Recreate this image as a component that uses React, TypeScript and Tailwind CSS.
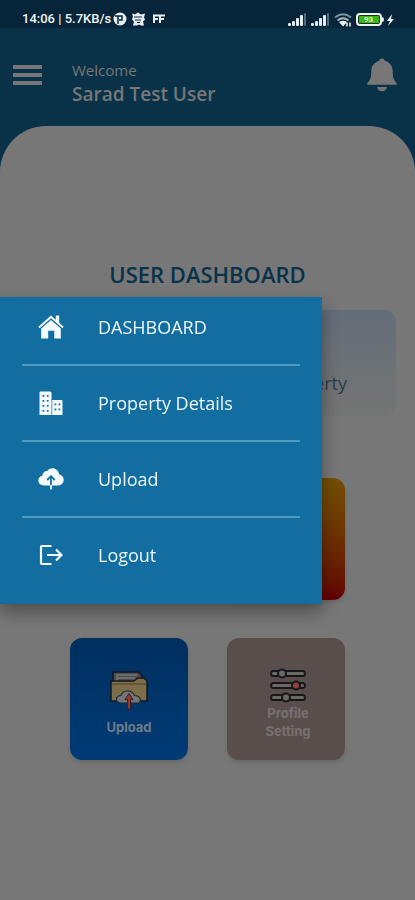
import type { ReactNode } from "react";

type MenuItem = { label: string; icon: ReactNode };

const HomeIcon = () => (
  <svg viewBox="0 0 26 24" className="w-[26px] h-6" fill="#f4fbff">
    <path d="M13 .5 17.800 4.700V.5h3.400v7.200l4.500 4-1.300 1.500L13 3.300 1.600 13.200.3 11.700z" />
    <path d="M13 5 22.800 13.500V23.500h-6.500v-7.800H10.200v7.800H3.200V13.500z" />
  </svg>
);

const BuildingIcon = () => (
  <svg viewBox="0 0 24 24" className="w-6 h-6" fill="#f4fbff">
    <path d="M1.500 .5H11q1.500 0 1.500 1.500V24H.5V1.500q0-1 1-1z" />
    <path d="M13.200 9h9.300q1 0 1 1v13q0 1-1 1h-9.300z" />
    <path
      fill="#126ea1"
      d="M3.500 4h1.800v1.800H3.500zM7.800 4h1.800v1.800H7.800zM3.500 9h1.800v1.800H3.500zM7.800 9h1.800v1.800H7.800zM3.500 14h1.800v1.800H3.500zM7.800 14h1.800v1.800H7.800zM3.500 19h1.800v1.800H3.500zM7.800 19h1.800v1.800H7.800zM15.500 12.500h1.800v1.800h-1.800zM19.500 12.500h1.800v1.800h-1.800zM15.500 17.500h1.800v1.800h-1.800zM19.500 17.500h1.800v1.800h-1.800z"
    />
  </svg>
);

const CloudIcon = () => (
  <svg viewBox="0 0 26 22" className="w-[26px] h-[22px]">
    <path
      fill="#f4fbff"
      d="M6 17.500C2.700 17.500.3 15.400.3 12.600c0-2.400 1.700-4.300 4-4.800C4.600 4.400 7 2.700 9.300 3c1.100-1.800 3-2.700 5-2.700 3.500 0 6.300 2.500 6.700 6 2.800.6 4.700 2.700 4.700 5.500 0 3.200-2.500 5.700-5.700 5.700z"
    />
    <path d="M13 18V9M9.200 12 13 8.200 16.800 12" fill="none" stroke="#126ea1" strokeWidth="1.800" />
    <path d="M13 17v4.500" stroke="#f4fbff" strokeWidth="1.800" />
  </svg>
);

const LogoutIcon = () => (
  <svg viewBox="0 0 24 22" className="w-6 h-[22px]" fill="none" stroke="#f4fbff" strokeWidth="2.200">
    <path d="M12.500 2H3Q2 2 2 3v16q0 1 1 1h9.500M8 11h14M17 5.500 22.500 11 17 16.500" />
  </svg>
);

const BellIcon = () => (
  <svg viewBox="0 0 30 34" className="w-[30px] h-[34px]" fill="#777">
    <path d="M15 .5c1.400 0 2.500.9 2.700 2.200 4.800 1.200 8 5.200 8 10.300 0 6.500.8 9 4 12v1.700H.3V25c3.200-3 4-5.500 4-12 0-5.100 3.200-9.100 8-10.300C12.500 1.400 13.600.5 15 .5z" />
    <path d="M10 29h10c-.5 2.600-2.200 4.300-5 4.300S10.500 31.600 10 29z" />
  </svg>
);

const FolderIcon = () => (
  <svg viewBox="0 0 40 40" className="w-10 h-10" strokeLinejoin="round">
    <path d="M4 14V2h26l3 4v9z" fill="#4b4b4d" stroke="#101820" strokeWidth="1.500" />
    <path d="M8 11V5h20M9 8h17" fill="none" stroke="#777" strokeWidth="1.500" />
    <path d="M2 11h23l4-3h6l3 3v20H2z" fill="#7c6e48" stroke="#101820" strokeWidth="1.500" />
    <path d="M3 14h34" stroke="#5f5230" strokeWidth="1.500" />
    <path
      d="M11 33q-4-1-3.500-4 .5-3.500 4.500-3.500 1.500-4.500 6.500-4.500t7 4.500q5 0 6 4.500 0 2.500-2 3z"
      fill="#737679"
      stroke="#202830"
      strokeWidth="1.200"
    />
    <path d="M20 23.500 24 29.500h-2.500V39h-3v-9.500H16z" fill="#8c3b2d" stroke="#3d2020" />
  </svg>
);

const SlidersIcon = () => (
  <svg viewBox="0 0 38 36" className="w-[38px] h-9" fill="#6b6868" stroke="#17171b" strokeWidth="2">
    <rect x="2" y="3" width="34" height="5" rx="2.500" />
    <rect x="2" y="15" width="34" height="5" rx="2.500" />
    <rect x="2" y="27" width="34" height="5" rx="2.500" />
    <circle cx="13" cy="5.500" r="4" />
    <circle cx="27" cy="17.500" r="4" fill="#93413f" />
    <circle cx="17" cy="29.500" r="4" />
  </svg>
);

const SignalIcon = () => (
  <svg viewBox="0 0 19 14" className="w-[19px] h-3.5" fill="#e4edf2">
    <rect x="0" y="10" width="3" height="3" rx="1" />
    <rect x="4" y="8" width="3" height="5" rx="1" />
    <rect x="8" y="5" width="3" height="8" rx="1" />
    <rect x="12" y="2" width="3" height="11" rx="1" />
    <rect x="16" y="0" width="2" height="13" rx="1" fill="#526b7b" />
  </svg>
);

const WifiIcon = () => (
  <svg viewBox="0 0 18 14" className="w-[18px] h-3.5" fill="none">
    <path d="M1 4.500q8-6.500 16 0" stroke="#7d909d" strokeWidth="1.800" />
    <path d="M3.500 7.500q5.500-4.500 11 0" stroke="#a9b7c0" strokeWidth="1.800" />
    <path d="m5 9 4 4.500L13 9Q9 6.500 5 9z" fill="#f4f8fa" />
    <path d="M13 9.500v4M16 9.500v4" stroke="#f4f8fa" strokeWidth="1.500" />
  </svg>
);

const BatteryIcon = () => (
  <svg viewBox="0 0 39 14" className="w-[39px] h-3.5">
    <rect x="1" y="1" width="24" height="11" rx="3" fill="#14340f" stroke="#edf2f4" strokeWidth="2" />
    <rect x="3" y="3" width="20" height="7" rx="1" fill="#3eb516" />
    <path d="M26 4q2 0 2 2.500T26 9z" fill="#edf2f4" />
    <text x="8" y="9" fontSize="8" fontWeight="700" fill="#d8ffc4" fontFamily="Roboto, sans-serif">
      93
    </text>
    <path d="m36 1-5 7h3l-2 5 6-7h-3z" fill="#edf2f4" />
  </svg>
);

const AppBadges = () => (
  <svg viewBox="0 0 56 14" className="w-14 h-3.5" fill="#e8eff3">
    <circle cx="7" cy="7" r="6.500" />
    <path d="M5 12V4h4v4H6M2 4h3" fill="none" stroke="#06253a" strokeWidth="1.500" />
    <path d="M19 1.500l3 1 3-2 3 2 4-1-1 4 1 2-2 2 1 4h-3l-2-1-2 1h-4l1-4-2-2 1-3z" />
    <path d="M21 5h8M22 8h6M24 10.500h3" stroke="#06253a" />
    <path d="M41 11V3.500h5M41 7h4M47 11V3.500h5M47 7h4" fill="none" stroke="#e8eff3" strokeWidth="2" />
  </svg>
);

const menu: MenuItem[] = [
  { label: "DASHBOARD", icon: <HomeIcon /> },
  { label: "Property Details", icon: <BuildingIcon /> },
  { label: "Upload", icon: <CloudIcon /> },
  { label: "Logout", icon: <LogoutIcon /> },
];

export default function App() {
  return (
    <div className="min-h-screen bg-[#093249] font-['Open_Sans',sans-serif]">
      <div className="flex h-7 items-end justify-between bg-[#06253a] pl-[22px] pr-5 pb-px text-[#f1f5f7]">
        <div className="flex items-center">
          <span className="mr-0.5 font-['Roboto',sans-serif] text-[13px] font-medium leading-4">
            14:06 | 5.7KB/s
          </span>
          <AppBadges />
        </div>
        <div className="flex items-center gap-1">
          <SignalIcon />
          <SignalIcon />
          <WifiIcon />
          <BatteryIcon />
        </div>
      </div>

      <header className="flex h-[98px] items-start pl-[13px] pr-[18px] pt-[30px] text-[#777]">
        <button aria-label="Menu" className="mt-[7px] flex w-[29px] shrink-0 flex-col gap-1">
          <span className="h-1 w-full bg-[#777]" />
          <span className="h-1 w-full bg-[#777]" />
          <span className="h-1 w-full bg-[#777]" />
        </button>
        <div className="ml-[30px] flex-1">
          <p className="text-[15px] leading-6">Welcome</p>
          <p className="text-[19px] font-semibold leading-6">Sarad Test User</p>
        </div>
        <button aria-label="Notifications">
          <BellIcon />
        </button>
      </header>

      <main className="min-h-[774px] rounded-t-[46px] bg-[#777] pt-[136px]">
        <h1 className="text-center text-[22px] font-semibold leading-6 text-[#09324b]">USER DASHBOARD</h1>

        <section className="mx-[19px] mt-6 flex h-[106px] items-center justify-end rounded-xl bg-linear-to-b from-[#636c7a] via-[#6d7276] to-[#737473] pr-[49px] pt-10 text-lg text-[#2c3b49]">
          Property
        </section>

        <div className="mx-[70px] mt-[62px] grid grid-cols-2 gap-x-[39px] gap-y-[38px]">
          <div className="h-[122px] rounded-xl bg-linear-to-b from-[#36654a] to-[#14422e]" />
          <div className="h-[122px] rounded-xl bg-linear-to-b from-[#735000] to-[#620000] shadow-md" />
          <button className="flex h-[122px] flex-col items-center rounded-xl bg-linear-to-b from-[#002f60] to-[#003b76] pt-8 font-['Inter',sans-serif] text-[13px] font-bold leading-[18px] text-[#6f7b8a] shadow-md">
            <FolderIcon />
            <span className="mt-2">Upload</span>
          </button>
          <button className="flex h-[122px] flex-col items-center rounded-xl bg-[#5a4e4c] pl-1 pt-[30px] font-['Inter',sans-serif] text-[13px] font-bold leading-[18px] text-[#777170] shadow-md">
            <SlidersIcon />
            <span>
              Profile
              <br />
              Setting
            </span>
          </button>
        </div>
      </main>

      {/* Popup menu */}
      <div className="fixed inset-0 flex items-center">
        <nav className="w-[322px] bg-[#126ea1] px-[22px] pb-3 shadow-[0_8px_16px_0_rgba(0,0,0,0.35)]">
          <ul className="-mt-[7px] divide-y-2 divide-[#5299c0]">
            {menu.map((item) => (
              <li key={item.label}>
                <a href="#" className="flex h-[74px] items-center text-lg text-[#edf7fc]">
                  <span className="flex w-[58px] justify-center">{item.icon}</span>
                  <span className="ml-[18px]">{item.label}</span>
                </a>
              </li>
            ))}
          </ul>
        </nav>
      </div>
    </div>
  );
}
